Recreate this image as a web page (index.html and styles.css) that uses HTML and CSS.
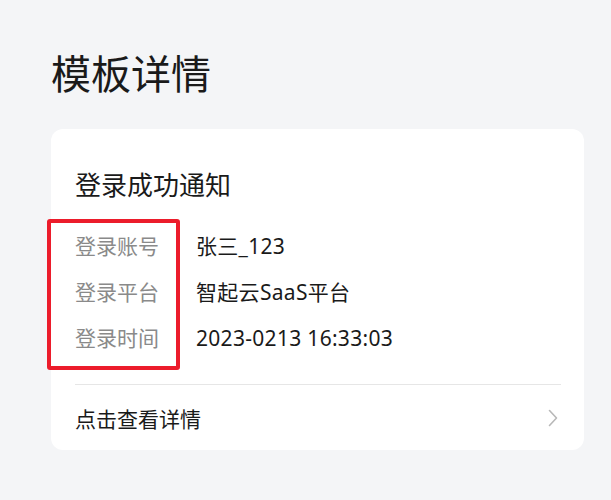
FILE: index.html
```html
<!DOCTYPE html>
<html lang="zh-CN">
<head>
<meta charset="utf-8">
<title>模板详情</title>
<link rel="stylesheet" href="styles.css">
</head>
<body>
<main class="page">
  <h1 class="page-title">模板详情</h1>
  <section class="card">
    <h2 class="card-title">登录成功通知</h2>
    <div class="rows">
      <div class="row"><span class="label">登录账号</span><span class="value">张三_123</span></div>
      <div class="row"><span class="label">登录平台</span><span class="value">智起云SaaS平台</span></div>
      <div class="row"><span class="label">登录时间</span><span class="value">2023-0213 16:33:03</span></div>
    </div>
    <div class="highlight"></div>
    <a class="footer" href="#">
      <span>点击查看详情</span>
      <svg class="chevron" width="10" height="18" viewBox="0 0 10 18"><path d="M1.5 1.5 L8.5 9 L1.5 16.5" fill="none" stroke="#b8b8b8" stroke-width="1.6" stroke-linecap="round" stroke-linejoin="round"/></svg>
    </a>
  </section>
</main>
</body>
</html>
```
FILE: styles.css
```css
html, body {
  margin: 0;
  padding: 0;
  background: #f4f5f7;
}
body {
  font-family: "Noto Sans", "Noto Sans CJK SC", sans-serif;
  color: #1a1a1a;
}
.page {
  padding: 48px 27px 0 51px;
}
.page-title {
  margin: 0;
  font-size: 40px;
  font-weight: 400;
  line-height: 52px;
  color: #1a1a1a;
}
.card {
  position: relative;
  margin-top: 29px;
  width: 533px;
  box-sizing: border-box;
  background: #fff;
  border-radius: 12px;
  padding: 38px 23px 0 24px;
}
.card-title {
  margin: 0;
  font-size: 26px;
  font-weight: 400;
  line-height: 36px;
}
.rows {
  margin-top: 20px;
  padding-bottom: 23px;
  border-bottom: 1px solid #e6e6e6;
}
.row {
  display: flex;
  height: 46px;
  line-height: 46px;
  font-size: 21px;
}
.label {
  width: 121px;
  flex: none;
  color: #8a8a8a;
}
.value {
  color: #1a1a1a;
  letter-spacing: 0.3px;
}
.highlight {
  position: absolute;
  left: -4px;
  top: 90px;
  width: 133px;
  height: 151px;
  box-sizing: border-box;
  border: 4px solid #ec1c2b;
  border-radius: 3px;
}
.footer {
  display: flex;
  align-items: center;
  justify-content: space-between;
  height: 65px;
  font-size: 21px;
  color: #1a1a1a;
  text-decoration: none;
}
.chevron {
  display: block;
  margin-right: 3px;
}
```
